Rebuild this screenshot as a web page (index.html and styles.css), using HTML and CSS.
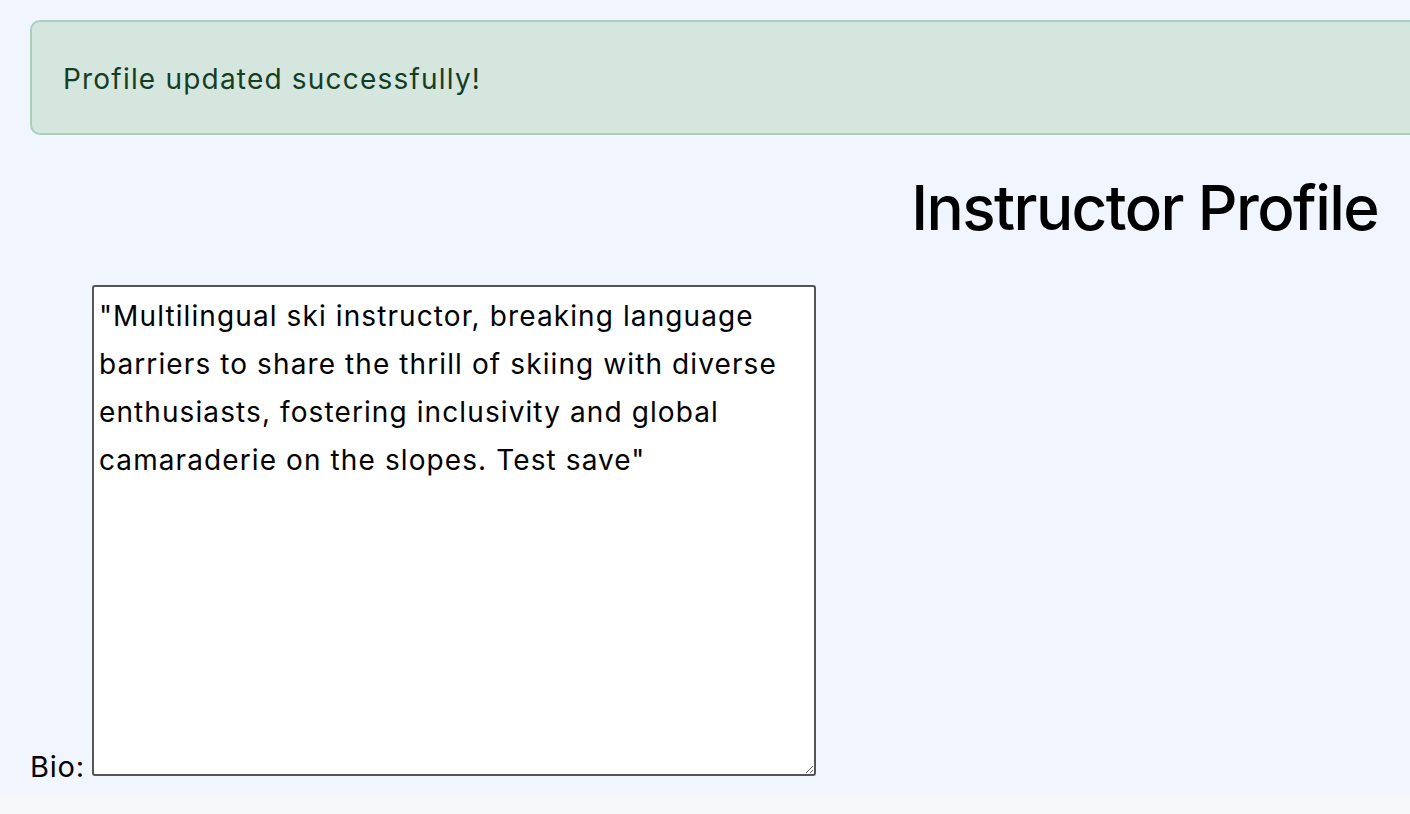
FILE: index.html
```html
<!DOCTYPE html>
<html lang="en">
<head>
<meta charset="utf-8">
<title>Instructor Profile</title>
<link rel="stylesheet" href="styles.css">
</head>
<body>
<div class="page">
  <div class="container">
    <div class="alert">Profile updated successfully!</div>
    <h1 class="title">Instructor Profile</h1>
    <form class="profile-form">
      <label class="bio-label" for="bio">Bio:</label>
      <textarea id="bio" class="bio-input">"Multilingual ski instructor, breaking language barriers to share the thrill of skiing with diverse enthusiasts, fostering inclusivity and global camaraderie on the slopes. Test save"</textarea>
    </form>
  </div>
</div>
</body>
</html>
```

FILE: styles.css
```css
html, body {
  margin: 0;
  padding: 0;
  overflow: hidden;
  background: #f7f8fa;
}
body {
  font-family: Inter, "Noto Sans", "Liberation Sans", sans-serif;
  color: #000;
  width: 1410px;
  height: 814px;
}
.page {
  background: #f1f5fe;
  height: 796px;
  overflow: hidden;
}
.container {
  padding: 20px 32px 0 30px;
}
.alert {
  margin-right: -60px;
  background: #d4e6de;
  border: 2px solid #a9cfbd;
  border-radius: 10px;
  padding: 30px 31px 26px;
  font-size: 28px;
  letter-spacing: 1.2px;
  line-height: 55px;
  color: #163d24;
}
.title {
  margin: 28px 0 0;
  text-align: right;
  font-size: 62px;
  font-weight: 500;
  letter-spacing: -1.6px;
  line-height: 90px;
}
.profile-form {
  display: flex;
  align-items: flex-end;
  margin-top: 32px;
  gap: 7px;
}
.bio-label {
  font-size: 29px;
  letter-spacing: 0.8px;
  line-height: 36px;
  margin-bottom: -9px;
}
.bio-input {
  width: 724px;
  height: 491px;
  box-sizing: border-box;
  border: 2px solid #555;
  border-radius: 3px;
  background: #fff;
  padding: 5px 5px;
  font-family: Inter, "Noto Sans", "Liberation Sans", sans-serif;
  font-size: 28px;
  letter-spacing: 1.1px;
  line-height: 48px;
  color: #000;
  resize: both;
}
```
